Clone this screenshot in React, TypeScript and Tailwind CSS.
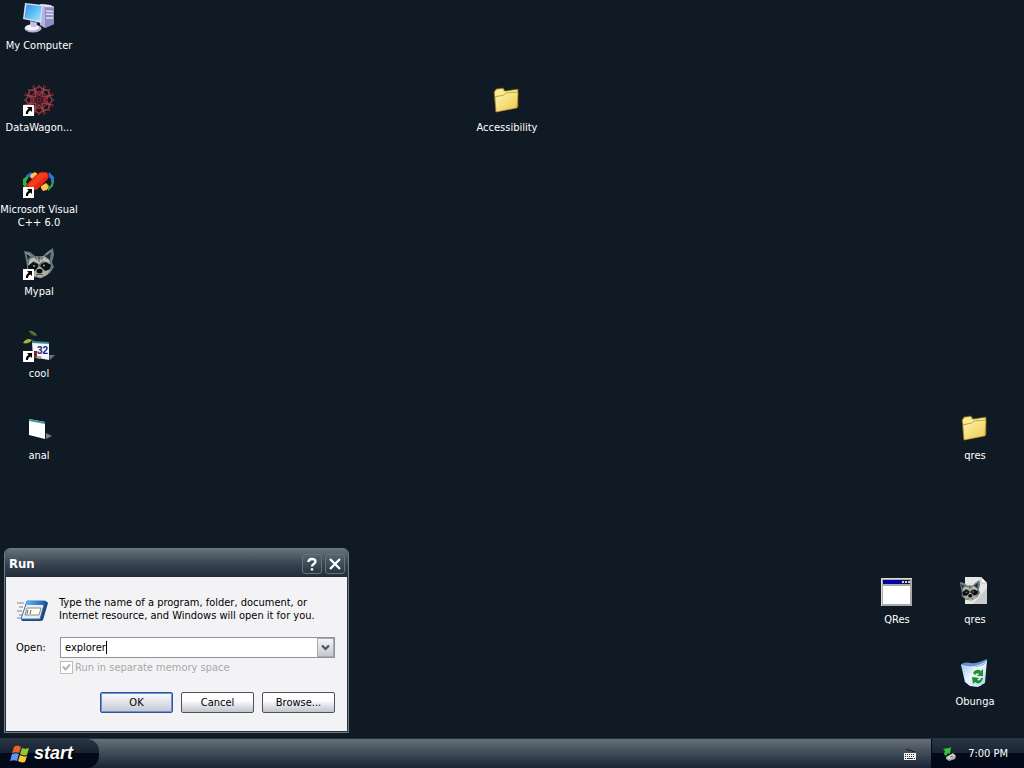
import { useState } from 'react';
import type { ReactNode } from 'react';

export default function Desktop() {
  return (
    <div className="h-screen flex flex-col overflow-hidden bg-[#101a25] text-white text-[11px] leading-[13px] font-['DejaVu_Sans_Condensed','Noto_Sans',sans-serif] select-none">
      <main className="relative flex-1 min-h-0">
        <div className="grid grid-cols-[repeat(13,76px)] auto-rows-[82px] gap-x-[2px] pl-px">
          <DesktopIcon label="My Computer" cell="col-start-1 row-start-1"><ComputerIcon /></DesktopIcon>
          <DesktopIcon label="DataWagon..." cell="col-start-1 row-start-2" shortcut><RosetteIcon /></DesktopIcon>
          <DesktopIcon label="Microsoft Visual C++ 6.0" cell="col-start-1 row-start-3" shortcut><VisualCIcon /></DesktopIcon>
          <DesktopIcon label="Mypal" cell="col-start-1 row-start-4" shortcut><RaccoonIcon /></DesktopIcon>
          <DesktopIcon label="cool" cell="col-start-1 row-start-5" shortcut><CoolIcon /></DesktopIcon>
          <DesktopIcon label="anal" cell="col-start-1 row-start-6"><SheetIcon /></DesktopIcon>
          <DesktopIcon label="Accessibility" cell="col-start-7 row-start-2"><FolderIcon /></DesktopIcon>
          <DesktopIcon label="qres" cell="col-start-13 row-start-6"><FolderIcon /></DesktopIcon>
          <DesktopIcon label="QRes" cell="col-start-12 row-start-8"><AppWindowIcon /></DesktopIcon>
          <DesktopIcon label="qres" cell="col-start-13 row-start-8"><RaccoonFileIcon /></DesktopIcon>
          <DesktopIcon label="Obunga" cell="col-start-13 row-start-9"><RecycleIcon /></DesktopIcon>
        </div>
        <RunDialog />
      </main>
      <Taskbar />
    </div>
  );
}

type DesktopIconProps = { label: string; cell: string; shortcut?: boolean; children: ReactNode };

function DesktopIcon({ label, cell, shortcut, children }: DesktopIconProps) {
  return (
    <button className={`flex flex-col items-center gap-[5px] pt-[2px] ${cell}`}>
      <span className="relative block size-8 shrink-0">
        {children}
        {shortcut && <ShortcutArrow />}
      </span>
      <span className="-mx-1 text-center">{label}</span>
    </button>
  );
}

function RunDialog() {
  const [command, setCommand] = useState('explorer');

  return (
    <section
      aria-label="Run"
      className="absolute left-1 bottom-[5px] w-[345px] rounded-t-md border border-[#6f7b84] bg-[#26323e] px-px pb-px text-black"
    >
      <header className="-mx-px flex h-7 items-center justify-between rounded-t-[5px] bg-linear-to-b from-[#65717b] via-[#37434f] via-55% to-[#222d3a] pl-1 pr-[3px] text-white">
        <h1 className="pt-[2px] text-[13px] font-bold leading-4">Run</h1>
        <div className="flex gap-[3px] pt-px">
          <TitleButton label="Help">
            <path d="M6.500 8C6.500 4 13.500 4 13.500 7.500C13.500 10 10 10 10 12.500M10 14.200v2.400" />
          </TitleButton>
          <TitleButton label="Close">
            <path d="M5 5l10 10M15 5L5 15" />
          </TitleButton>
        </div>
      </header>

      <form className="bg-[#f3f3f6] pl-[10px] pr-3 pt-[18px] pb-[18px]" onSubmit={(e) => e.preventDefault()}>
        <div className="flex gap-[11px]">
          <RunIcon />
          <p className="pt-px">
            Type the name of a program, folder, document, or
            <br />
            Internet resource, and Windows will open it for you.
          </p>
        </div>

        <div className="mt-[10px] flex items-center">
          <label htmlFor="command" className="w-11">Open:</label>
          <div className="flex h-[21px] flex-1 items-center border border-[#8f9399] bg-white pl-1">
            <input
              id="command"
              value={command}
              onChange={(e) => setCommand(e.target.value)}
              className="field-sizing-content caret-transparent outline-none"
            />
            <span className="h-[13px] w-px bg-black" />
            <button
              type="button"
              aria-label="Show recent commands"
              className="ml-auto flex h-[19px] w-[17px] items-center justify-center border border-[#a5aab1] bg-linear-to-b from-[#f4f5f7] to-[#c3c8d0]"
            >
              <svg viewBox="0 0 9 7" className="h-[7px] w-[9px]">
                <path d="M1 1.500L4.500 5L8 1.500" fill="none" stroke="#4b5259" strokeWidth="2.200" />
              </svg>
            </button>
          </div>
        </div>

        <label className="ml-11 mt-[3px] flex items-center gap-[2px] text-[#a8a8a6]">
          <input type="checkbox" checked disabled className="peer sr-only" />
          <span className="flex size-[13px] items-center justify-center border border-[#bdbdba] bg-white">
            <svg viewBox="0 0 9 9" className="size-[9px]">
              <path d="M1 3.500L3.500 6.500L8 1.500" fill="none" stroke="#b3b3b0" strokeWidth="2" />
            </svg>
          </span>
          Run in separate memory space
        </label>

        <div className="mt-[18px] flex justify-end gap-2">
          <button
            type="submit"
            className="h-[21px] w-[73px] rounded-[2px] border border-[#32529a] bg-linear-to-b from-[#fdfdfe] to-[#c2c7d2] shadow-[inset_0_0_0_1px_#6f93d2]"
          >
            OK
          </button>
          <DialogButton text="Cancel" />
          <DialogButton text="Browse..." />
        </div>
      </form>
    </section>
  );
}

function DialogButton({ text }: { text: string }) {
  return (
    <button
      type="button"
      className="h-[21px] w-[73px] rounded-[2px] border border-[#4d5258] bg-linear-to-b from-[#fdfdfe] from-40% to-[#c0c4ce]"
    >
      {text}
    </button>
  );
}

function TitleButton({ label, children }: { label: string; children: ReactNode }) {
  return (
    <button
      type="button"
      aria-label={label}
      className="size-5 rounded-[3px] border border-[#65717b] bg-linear-to-b from-[#56626d] to-[#2a3642]"
    >
      <svg viewBox="1 1 18 18" className="size-full" fill="none" stroke="#fff" strokeWidth="2.400">
        {children}
      </svg>
    </button>
  );
}

function Taskbar() {
  return (
    <footer className="flex h-[30px] shrink-0 bg-linear-to-b from-[#65707a] via-[#3f4a57] via-50% to-[#1b2535] border-t border-[#27323d]">
      <button className="flex w-[99px] items-center gap-1 rounded-r-[12px] bg-linear-to-b from-[#293644] from-0% via-[#152130] via-50% to-[#020919] to-50% pl-[10px]">
        <FlagIcon />
        <span className="pb-px font-['Liberation_Sans',sans-serif] text-lg font-bold italic leading-5 [text-shadow:1px_1px_1px_#000]">start</span>
      </button>
      <div className="flex flex-1 items-center justify-end pr-[14px]">
        <KeyboardIcon />
      </div>
      <div className="flex items-center gap-[10px] border-l border-[#05090f] bg-linear-to-b from-[#293644] from-0% via-[#182432] via-50% to-[#020919] to-50% pl-[10px] pr-4">
        <RemoveHardwareIcon />
        <time>7:00 PM</time>
      </div>
    </footer>
  );
}

function ShortcutArrow() {
  return (
    <svg viewBox="0 0 11 11" className="absolute bottom-0 left-0 size-[11px]">
      <rect width="11" height="11" fill="#fff" />
      <path d="M4 2h5v5L7.400 5.500C5.500 6.500 5 7.500 5 9H3C2.500 6.500 4 4.800 5.600 3.700z" fill="#000" />
    </svg>
  );
}

function ComputerIcon() {
  return (
    <svg viewBox="0 0 32 32" className="size-8">
      <defs>
        <linearGradient id="screen" x1="0" y1="0" x2="1" y2="1">
          <stop offset="0" stopColor="#2c8de8" />
          <stop offset="0.600" stopColor="#68c8fa" />
          <stop offset="1" stopColor="#a8e6ff" />
        </linearGradient>
      </defs>
      <path d="M17 2l10 1 4 2v17l-9 4-5-3z" fill="#b6b2df" />
      <path d="M22 5l9 1v16l-9 4z" fill="#8f8dc4" />
      <path d="M17 2l10 1 4 2-9 0z" fill="#e4e2f8" />
      <path d="M23 9l7 .5M23 12l7 .5M23 16l7 0" stroke="#dcdcf8" strokeWidth="1.500" />
      <path d="M2 1l18 2-2 18L0 17z" fill="#d9d9f2" />
      <path d="M3.500 2.500l15 1.700-1.800 14.800L1.500 16z" fill="url(#screen)" />
      <path d="M7 19l7 1.500v5H7z" fill="#aaa8d5" />
      <ellipse cx="10" cy="26.500" rx="8.500" ry="4" fill="#b5b3dc" />
      <ellipse cx="9" cy="25.500" rx="7" ry="3" fill="#f2f2fc" />
      <path d="M8 20l5 1v4H8z" fill="#c3c1e4" />
    </svg>
  );
}

function RosetteIcon() {
  const angles = [0, 45, 90, 135, 180, 225, 270, 315];
  return (
    <svg viewBox="0 0 32 32" className="size-8" fill="none" stroke="#a5323c">
      {angles.map((angle) => (
        <g key={angle} transform={`rotate(${angle} 16 16)`}>
          <path d="M9 2l7 10 7-10M10 11l6-10 6 10" strokeWidth=".8" />
          <path d="M11 5l5-2 5 2-5 6z" strokeWidth=".7" stroke="#c04a54" />
          <path d="M13 10h6M11 8l6 7" strokeWidth=".8" stroke="#8a2c36" />
        </g>
      ))}
      <circle cx="16" cy="16" r="3" stroke="#42141d" />
    </svg>
  );
}

function VisualCIcon() {
  return (
    <svg viewBox="0 0 32 32" className="size-8">
      <path d="M8 6L3 9.500l0 3 3-1 3-3z" fill="#2869e0" />
      <path d="M4 10L0 13v6l3 3 2-3-2-3 2-4z" fill="#2cb43b" />
      <path d="M26 6l5 5v5l-3 0v-3l-3-3z" fill="#2d72df" />
      <path d="M31 15l-1 5-5 5v-3l3-3 1-4z" fill="#2eae3c" />
      <path d="M8 8l4-2 4 3-1 4-5 1-3-3z" fill="#ffc348" />
      <path d="M18 20l5-3 3 3-2 4-4 1-2-3z" fill="#ffc348" />
      <path d="M17 6h7l2 4-1 3-11 11H7l-4-4 2-3z" fill="#e42a12" stroke="#54100b" strokeWidth=".6" />
      <path d="M17 7h6l2 3-4 1L9 22l-4-2 1-3z" fill="#f63c1c" />
    </svg>
  );
}

function RaccoonFace() {
  return (
    <>
      <path d="M1 3l6 1 5 4h8l4-4 6-4 1 7-2 7 2 5-4 6-8 5-9-1-6-5 0-6-1-6z" fill="#66777e" />
      <path d="M3 5l5 3-3 4zM28 3l-6 5 5 4z" fill="#1c3040" />
      <path d="M3 5l5 3M28 3l-5 4" stroke="#9eb1b3" />
      <path d="M7 11l6-2 3 3 4-4 6 4 1 4-7-3-4 3-5-3-6 5z" fill="#bbbcac" />
      <path d="M5 18l5-4 5 2 0 4-4 3-5 1zM28 17l-5-3-5 2-1 4 4 3 5 0z" fill="#0b1115" />
      <circle cx="11" cy="18" r="1.100" fill="#8b9588" />
      <circle cx="21" cy="17.500" r="1.100" fill="#8b9588" />
      <path d="M5 23l7 0 3-4h3l4 4 6-2-4 6-7 3-6-2z" fill="#adae9d" />
      <ellipse cx="16.500" cy="23" rx="3" ry="2.300" fill="#080c0f" />
      <path d="M13 27l4-1 3 1M16 8v6M12 9l2 3M20 9l-2 3" stroke="#454e4c" fill="none" />
    </>
  );
}

function RaccoonIcon() {
  return (
    <svg viewBox="0 0 32 32" className="size-8">
      <RaccoonFace />
    </svg>
  );
}

function RaccoonFileIcon() {
  return (
    <svg viewBox="0 0 32 32" className="size-8">
      <path d="M6 1h16l6 6v21H6z" fill="#e4e5e5" />
      <path d="M14 28L28 12v16z" fill="#c8cacb" />
      <path d="M22 1l6 6h-6z" fill="#fff" stroke="#9fa3a6" strokeWidth=".6" />
      <g transform="translate(0 4) scale(.68)">
        <RaccoonFace />
      </g>
    </svg>
  );
}

function CoolIcon() {
  return (
    <svg viewBox="0 0 32 32" className="size-8">
      <path d="M6 1c4-1 7 1 8 5-4 0-7-1-8-5z" fill="#355b2c" />
      <path d="M7 1l6 4" stroke="#6b9a3c" />
      <path d="M0 13c2-4 6-5 9-3-2 3-6 4-9 3z" fill="#a4b13c" />
      <path d="M9 10c2 0 3 1 4 3" stroke="#3d6b2c" fill="none" />
      <path d="M9 12l17 1v17l-16-3z" fill="#f6f8fb" />
      <path d="M9 11l17 1v2L9 13z" fill="#3c8e91" />
      <path d="M10 21l4 0v7l-4-1z" fill="#8c1d28" />
      <path d="M14 26l5 0-2 3-4-1z" fill="#a9a9ad" />
      <path d="M26 25h6l-5 5z" fill="#6d7177" />
      <text x="14" y="24" fontSize="10" fontWeight="bold" fontFamily="Liberation Sans" fill="#20237f">32</text>
    </svg>
  );
}

function SheetIcon() {
  return (
    <svg viewBox="0 0 32 32" className="size-8">
      <path d="M6 7l16 3v17L6 23z" fill="#fdfefe" />
      <path d="M6 7l16 3v2L6 9z" fill="#3b9a97" />
      <path d="M23 21l6 3-6 3z" fill="#777d82" />
    </svg>
  );
}

function FolderIcon() {
  return (
    <svg viewBox="0 0 32 32" className="size-8">
      <defs>
        <linearGradient id="folder" x1="0" y1="0" x2="1" y2="1">
          <stop offset="0" stopColor="#fff7b0" />
          <stop offset="1" stopColor="#ecc649" />
        </linearGradient>
      </defs>
      <path d="M3 8l2-3 7-1 2 3 13-2v18L5 28z" fill="#e9cd69" stroke="#6f5711" strokeWidth=".7" />
      <path d="M4 8l2-2 5-1 2 3 13-2v3L4 12z" fill="#fbea91" />
      <path d="M4 13l9-2 2-2 12-1-1 16-21 4z" fill="url(#folder)" stroke="#9c7c21" strokeWidth=".6" />
    </svg>
  );
}

function AppWindowIcon() {
  return (
    <svg viewBox="0 0 32 32" className="size-8">
      <rect y="2" width="31" height="28" fill="#a9a9a9" />
      <path d="M.5 30V2.500H31" fill="none" stroke="#deddd8" />
      <rect x="2" y="4" width="27" height="4" fill="#0000a4" />
      <path d="M20 4h9v4h-9z" fill="#161640" />
      <path d="M21 5h2v2h-2zM24 5h2v2h-2zM27 5h2v2h-2z" fill="#d0d0d0" />
      <rect x="2" y="10" width="27" height="18" fill="#fff" />
    </svg>
  );
}

function RecycleIcon() {
  return (
    <svg viewBox="0 0 32 32" className="size-8">
      <defs>
        <linearGradient id="bin" x1="0" y1="0" x2="1" y2="1">
          <stop offset="0" stopColor="#8db9ea" />
          <stop offset="0.500" stopColor="#eef7ff" />
          <stop offset="1" stopColor="#a9cbed" />
        </linearGradient>
      </defs>
      <path d="M2 7l10 2L28 2l-2 23-7 4-8-1-5-4z" fill="url(#bin)" />
      <path d="M2 7c2-3 6-3 10-2 6 1 10-2 16-4 0 6-8 8-13 8-6 0-9 0-13-2z" fill="#6793ce" />
      <path d="M2 7c6 3 17 3 26-4M6 23c3 4 9 6 16 4" fill="none" stroke="#d7edff" />
      <path d="M14 15c2-4 6-4 8-2l2-2v7h-6l2-2c-2-1-3 0-4 1z" fill="#229532" />
      <path d="M24 20c-1 5-5 7-8 4l-2 2-1-7 7 1-2 2c2 1 4 0 4-2z" fill="#159026" />
    </svg>
  );
}

function RunIcon() {
  return (
    <svg viewBox="0 0 32 32" className="size-8 shrink-0">
      <defs>
        <linearGradient id="runTitle" x1="0" y1="0" x2="1" y2="0">
          <stop offset="0" stopColor="#63b8f1" />
          <stop offset="1" stopColor="#1558b5" />
        </linearGradient>
      </defs>
      <path d="M1 8h7M3 12h4M1 16h5M3 20h3M1 23h4" stroke="#77838f" />
      <path d="M11 6h19l2 2-5 17-2 1H6l-1-2z" fill="#234779" />
      <path d="M11 6h18l-5 18H5z" fill="#e8edf2" stroke="#3976bc" />
      <path d="M11 6h19l-1 4H10z" fill="url(#runTitle)" />
      <path d="M11 13h14l-2 7H9z" fill="#fffef1" stroke="#8a927f" />
      <path d="M12 15l-1 4M15 15l-1 4" stroke="#5b6672" />
    </svg>
  );
}

function FlagIcon() {
  return (
    <svg viewBox="0 0 20 20" className="size-5">
      <path d="M4 3c3-2 5-1 7 0L9 9C7 8 5 8 2 9z" fill="#ed602b" />
      <path d="M12 4c2 1 4 1 7 0l-2 7c-3 1-5 0-7-1z" fill="#91c72d" />
      <path d="M2 10c3-1 5-1 7 0l-2 7c-2-1-4-1-7 0z" fill="#5b96f5" />
      <path d="M10 11c2 1 4 2 7 1l-2 6c-3 1-5 0-7-1z" fill="#ffc832" />
    </svg>
  );
}

function KeyboardIcon() {
  return (
    <svg viewBox="0 0 14 14" className="size-[14px]">
      <path d="M3 2c1 2 2-1 3 1s2-1 3 1 2-1 3 1" stroke="#10151b" fill="none" />
      <rect x="1" y="6" width="12" height="7" fill="#f1f1ef" />
      <path d="M2 7.500h10M2 9.500h10" stroke="#333" strokeDasharray="1 1" />
      <path d="M2 11.500h1M4 11.500h6M11 11.500h1" stroke="#333" />
    </svg>
  );
}

function RemoveHardwareIcon() {
  return (
    <svg viewBox="0 0 16 16" className="size-4">
      <path d="M4 11l7-4 3 3-1 3-6 2-3-2z" fill="#a9acad" />
      <path d="M5 11l6-3 2 2-6 3z" fill="#e1e2df" />
      <path d="M8 11l3-1" stroke="#585d60" />
      <path d="M1 3l6-1 2-1-1 7-2-1-2 3-2-2 1-3z" fill="#35c52e" />
    </svg>
  );
}
